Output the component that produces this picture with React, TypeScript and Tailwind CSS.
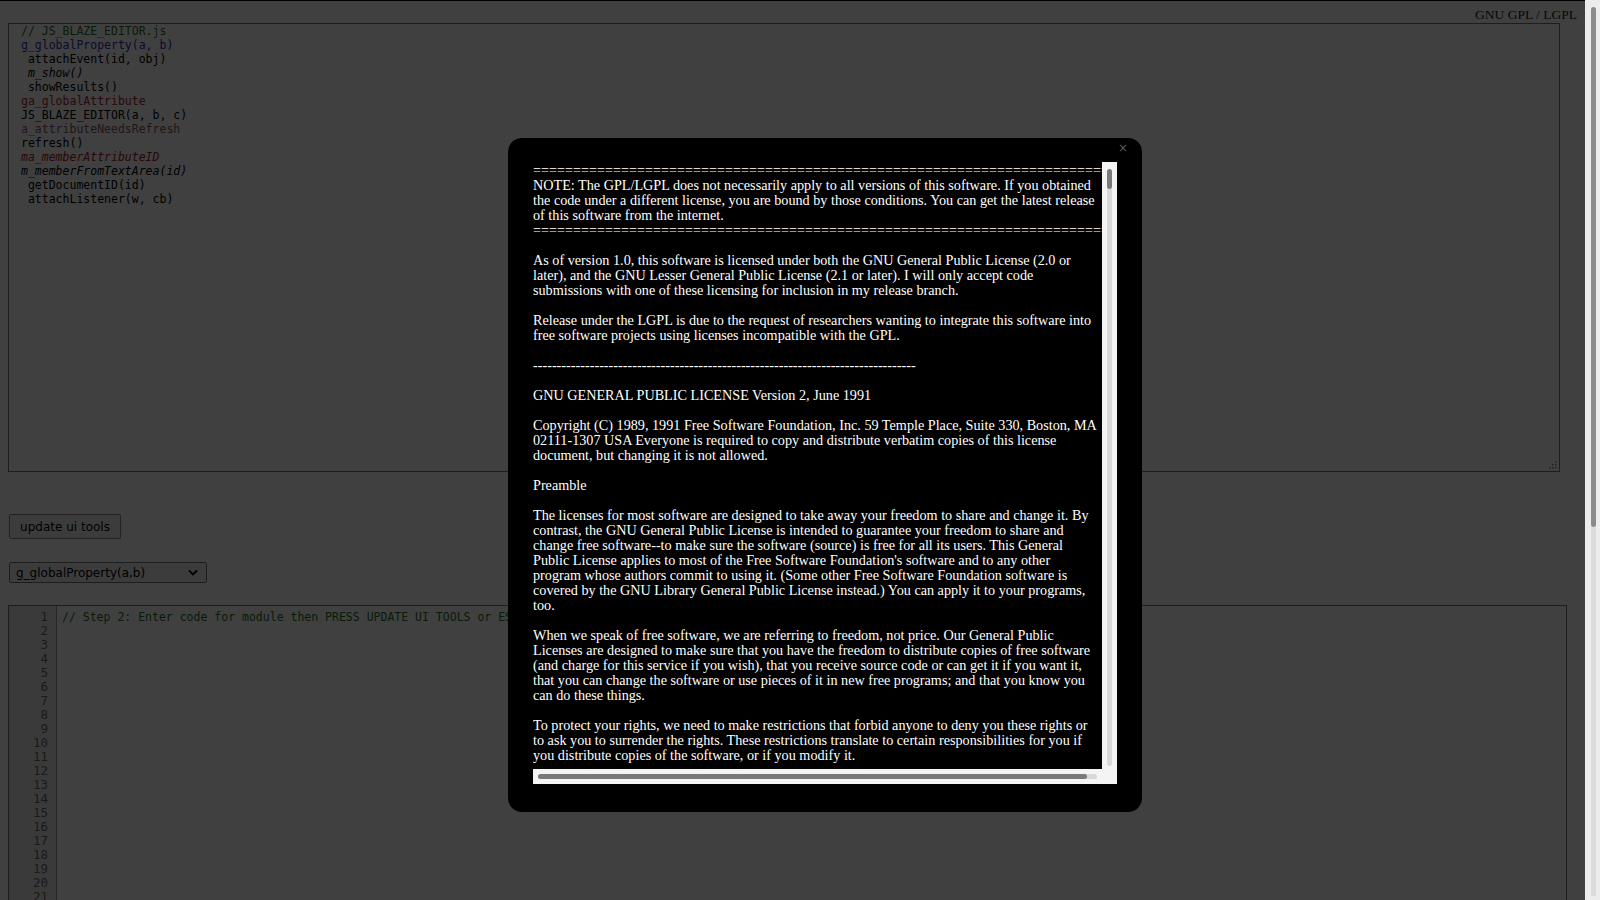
import React from 'react';

const outline = [
  { t: '// JS_BLAZE_EDITOR.js', c: 'text-[#267226]' },
  { t: 'g_globalProperty(a, b)', c: 'text-[#3030b0]' },
  { t: ' attachEvent(id, obj)', c: 'text-black' },
  { t: ' m_show()', c: 'text-black italic' },
  { t: ' showResults()', c: 'text-black' },
  { t: 'ga_globalAttribute', c: 'text-[#b02424]' },
  { t: 'JS_BLAZE_EDITOR(a, b, c)', c: 'text-black' },
  { t: 'a_attributeNeedsRefresh', c: 'text-[#905466]' },
  { t: 'refresh()', c: 'text-black' },
  { t: 'ma_memberAttributeID', c: 'text-[#a82020] italic' },
  { t: 'm_memberFromTextArea(id)', c: 'text-black italic' },
  { t: ' getDocumentID(id)', c: 'text-black' },
  { t: ' attachListener(w, cb)', c: 'text-black' },
];

const eq = '='.repeat(74);

const license: string[][] = [
  [
    eq,
    'NOTE: The GPL/LGPL does not necessarily apply to all versions of this software. If you obtained',
    'the code under a different license, you are bound by those conditions. You can get the latest release',
    'of this software from the internet.',
    eq,
  ],
  [
    'As of version 1.0, this software is licensed under both the GNU General Public License (2.0 or',
    'later), and the GNU Lesser General Public License (2.1 or later). I will only accept code',
    'submissions with one of these licensing for inclusion in my release branch.',
  ],
  [
    'Release under the LGPL is due to the request of researchers wanting to integrate this software into',
    'free software projects using licenses incompatible with the GPL.',
  ],
  ['-'.repeat(81)],
  ['GNU GENERAL PUBLIC LICENSE Version 2, June 1991'],
  [
    'Copyright (C) 1989, 1991 Free Software Foundation, Inc. 59 Temple Place, Suite 330, Boston, MA',
    '02111-1307 USA Everyone is required to copy and distribute verbatim copies of this license',
    'document, but changing it is not allowed.',
  ],
  ['Preamble'],
  [
    'The licenses for most software are designed to take away your freedom to share and change it. By',
    'contrast, the GNU General Public License is intended to guarantee your freedom to share and',
    'change free software--to make sure the software (source) is free for all its users. This General',
    "Public License applies to most of the Free Software Foundation's software and to any other",
    'program whose authors commit to using it. (Some other Free Software Foundation software is',
    'covered by the GNU Library General Public License instead.) You can apply it to your programs,',
    'too.',
  ],
  [
    'When we speak of free software, we are referring to freedom, not price. Our General Public',
    'Licenses are designed to make sure that you have the freedom to distribute copies of free software',
    '(and charge for this service if you wish), that you receive source code or can get it if you want it,',
    'that you can change the software or use pieces of it in new free programs; and that you know you',
    'can do these things.',
  ],
  [
    'To protect your rights, we need to make restrictions that forbid anyone to deny you these rights or',
    'to ask you to surrender the rights. These restrictions translate to certain responsibilities for you if',
    'you distribute copies of the software, or if you modify it.',
  ],
];

function ResizeGrip() {
  const dots = [
    [8, 2], [8, 5], [5, 5], [8, 8], [5, 8], [2, 8],
  ];
  return (
    <svg width="11" height="11" viewBox="0 0 11 11" className="absolute bottom-[1px] right-[1px]">
      {dots.map(([x, y], i) => (
        <rect key={i} x={x} y={y} width="1.5" height="1.5" fill="#8a8a8a" />
      ))}
    </svg>
  );
}

function LicenseModal() {
  return (
    <div className="absolute left-[508px] top-[137px] w-[634px] h-[674px] rounded-[14px] bg-black pl-[25px] pt-[24px]">
      <span className="absolute right-[14px] top-[1px] font-['DejaVu_Sans',sans-serif] text-[12px] text-[#5a5a5a] select-none">×</span>
      <div className="grid grid-cols-[569px_15px] grid-rows-[607px_15px] w-[584px] h-[622px]">
        <div className="overflow-hidden bg-black pt-[1px] font-['Liberation_Serif',serif] text-[14.2px] leading-[15px] text-white">
          {license.map((para, i) => (
            <div key={i} className={i === 0 ? '' : 'mt-[15px]'}>
              {para.map((line, j) => (
                <div key={j} className="whitespace-nowrap">{line}</div>
              ))}
            </div>
          ))}
        </div>
        <div className="flex flex-col items-center bg-[#f4f4f4] pt-[7px] pb-[3px]">
          <div className="w-[5px] h-[20px] rounded-full bg-[#7a7a7a]" />
          <div className="w-[5px] flex-1 rounded-b-full bg-[#d8d8d8]" />
        </div>
        <div className="flex items-center bg-[#f4f4f4] pl-[5px] pr-[5px]">
          <div className="h-[5px] w-full rounded-full bg-[#d8d8d8]">
            <div className="h-[5px] w-[549px] rounded-full bg-[#7a7a7a]" />
          </div>
        </div>
        <div className="bg-[#f4f4f4]" />
      </div>
    </div>
  );
}

export default function App() {
  const lineNumbers = Array.from({ length: 21 }, (_, i) => i + 1);
  return (
    <div className="flex h-screen w-full overflow-hidden bg-white">
      <div className="relative flex-1 min-w-0 border-t border-black">
        <div className="h-[22px] pr-[8px] pt-[6px] text-right font-['Liberation_Serif',serif] text-[13.5px] leading-[16px] text-[#222]">
          GNU GPL / LGPL
        </div>

        <div className="relative ml-[8px] mr-[25px] h-[449px] border border-[#767676] pl-[12px] font-['DejaVu_Sans_Mono',monospace] text-[11.5px] leading-[14px]">
          {outline.map((o, i) => (
            <div key={i} className={`whitespace-pre ${o.c}`}>{o.t}</div>
          ))}
          <ResizeGrip />
        </div>

        <button className="ml-[9px] mt-[42px] block h-[25px] w-[112px] rounded-[2px] border border-[#8a8a8a] bg-[#f0f0f0] font-['DejaVu_Sans',sans-serif] text-[12px] text-black">
          update ui tools
        </button>

        <div className="ml-[9px] mt-[23px] flex h-[21px] w-[198px] items-center justify-between rounded-[2px] border border-[#767676] bg-[#eeeeee] pl-[6px] pr-[8px] font-['DejaVu_Sans',sans-serif] text-[12px] text-black">
          <span>g_globalProperty(a,b)</span>
          <svg width="10" height="7" viewBox="0 0 10 7">
            <path d="M1 1.5 L5 5.5 L9 1.5" fill="none" stroke="#000" strokeWidth="1.8" />
          </svg>
        </div>

        <div className="ml-[8px] mr-[18px] mt-[22px] flex h-[400px] border border-[#767676] font-['DejaVu_Sans_Mono',monospace] text-[11.5px] leading-[14px]">
          <div className="w-[48px] shrink-0 border-r border-[#9a9a9a] bg-[#e6e6e6] pt-[4px] pr-[8px] text-right text-[12.5px] text-[#6a6a6a]">
            {lineNumbers.map(n => (
              <div key={n}>{n}</div>
            ))}
          </div>
          <div className="flex-1 pl-[5px] pt-[4px] text-[#267226] whitespace-pre">
            // Step 2: Enter code for module then PRESS UPDATE UI TOOLS or ESC to continue
          </div>
        </div>

        <div className="absolute inset-0 bg-black/75" />
        <LicenseModal />
      </div>

      <div className="flex w-[15px] shrink-0 flex-col items-center bg-[#ececec] pt-[7px] pb-[4px] pl-[1px]">
        <div className="h-[520px] w-[5px] rounded-full bg-[#8b8b8b]" />
        <div className="w-[5px] flex-1 bg-[#dcdcdc]" />
      </div>
    </div>
  );
}
